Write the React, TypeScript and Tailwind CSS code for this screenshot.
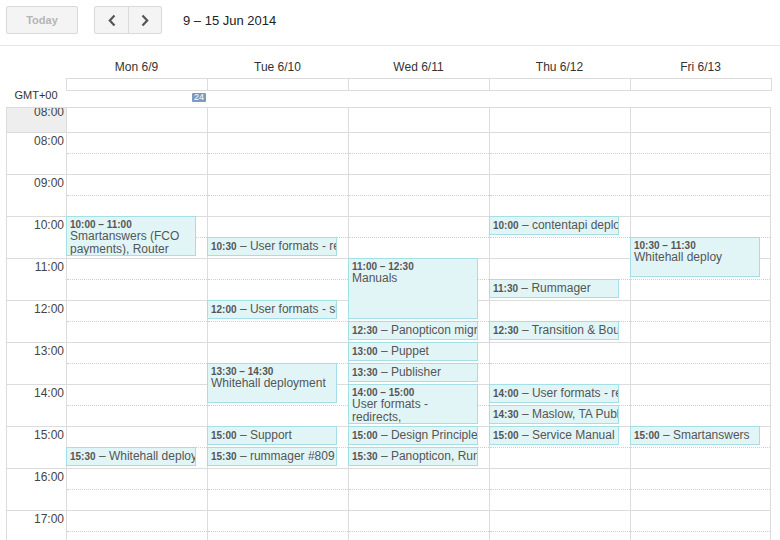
import React from "react";

type Ev = { h: number; m: number; d: number; t: string };

const DAYS = ["Mon 6/9", "Tue 6/10", "Wed 6/11", "Thu 6/12", "Fri 6/13"];
const HOURS = ["08:00", "09:00", "10:00", "11:00", "12:00", "13:00", "14:00", "15:00", "16:00", "17:00"];

const EVENTS: Ev[][] = [
  [
    { h: 10, m: 0, d: 60, t: "Smartanswers (FCO payments), Router" },
    { h: 15, m: 30, d: 30, t: "Whitehall deploy" },
  ],
  [
    { h: 10, m: 30, d: 30, t: "User formats - redirects" },
    { h: 12, m: 0, d: 30, t: "User formats - slugs" },
    { h: 13, m: 30, d: 60, t: "Whitehall deployment" },
    { h: 15, m: 0, d: 30, t: "Support" },
    { h: 15, m: 30, d: 30, t: "rummager #809 reindex" },
  ],
  [
    { h: 11, m: 0, d: 90, t: "Manuals" },
    { h: 12, m: 30, d: 30, t: "Panopticon migration" },
    { h: 13, m: 0, d: 30, t: "Puppet" },
    { h: 13, m: 30, d: 30, t: "Publisher" },
    { h: 14, m: 0, d: 60, t: "User formats - redirects," },
    { h: 15, m: 0, d: 30, t: "Design Principles" },
    { h: 15, m: 30, d: 30, t: "Panopticon, Rummager" },
  ],
  [
    { h: 10, m: 0, d: 30, t: "contentapi deploy" },
    { h: 11, m: 30, d: 30, t: "Rummager" },
    { h: 12, m: 30, d: 30, t: "Transition & Bouncer" },
    { h: 14, m: 0, d: 30, t: "User formats - redirects" },
    { h: 14, m: 30, d: 30, t: "Maslow, TA Publisher" },
    { h: 15, m: 0, d: 30, t: "Service Manual" },
  ],
  [
    { h: 10, m: 30, d: 60, t: "Whitehall deploy" },
    { h: 15, m: 0, d: 30, t: "Smartanswers" },
  ],
];

const pad = (n: number) => (n < 10 ? "0" + n : "" + n);
const fmt = (h: number, m: number) => `${pad(h)}:${pad(m)}`;

function Event({ e }: { e: Ev }) {
  const top = 25 + (e.h - 8) * 42 + e.m * 0.7;
  const height = e.d * 0.7 - 2;
  const endMin = e.h * 60 + e.m + e.d;
  const style = { top: `${top}px`, height: `${height}px` };
  if (e.d >= 60) {
    return (
      <div
        className="absolute -left-px w-[130px] border border-[#a3dfe4] bg-[#e1f5f7] text-[#555] overflow-hidden pl-[3px] pt-[2px]"
        style={style}
      >
        <div className="text-[10px] font-bold leading-[11px] whitespace-nowrap">
          {fmt(e.h, e.m)} – {fmt(Math.floor(endMin / 60), endMin % 60)}
        </div>
        <div className="text-[12px] leading-[13px]">{e.t}</div>
      </div>
    );
  }
  return (
    <div
      className="absolute -left-px w-[130px] border border-[#a3dfe4] bg-[#e1f5f7] text-[#555] overflow-hidden whitespace-nowrap pl-[3px] pt-px text-[12px] leading-[15px]"
      style={style}
    >
      <span className="text-[10px] font-bold">{fmt(e.h, e.m)}</span> – {e.t}
    </div>
  );
}

export default function App() {
  return (
    <div className="w-[780px] h-[540px] overflow-hidden bg-white font-['Liberation_Sans',Arial,sans-serif] text-[#333]">
      {/* toolbar */}
      <div className="h-[46px] flex items-start pt-[6px] pl-[6px] border-b border-[#e6e6e6]">
        <div className="w-[72px] h-[28px] flex items-center justify-center border border-[#dadada] rounded-[2px] bg-[#f4f4f4] text-[11px] font-bold text-[#b4b4b4]">
          Today
        </div>
        <div className="ml-[16px] w-[68px] h-[28px] flex border border-[#dadada] rounded-[2px] bg-[#f4f4f4]">
          <div className="w-[34px] h-full flex items-center justify-center border-r border-[#dadada]">
            <svg width="10" height="13" viewBox="0 0 10 13">
              <path d="M7.5 1.5 L2.8 6.5 L7.5 11.5" fill="none" stroke="#555" strokeWidth="2.2" />
            </svg>
          </div>
          <div className="flex-1 h-full flex items-center justify-center">
            <svg width="10" height="13" viewBox="0 0 10 13">
              <path d="M2.5 1.5 L7.2 6.5 L2.5 11.5" fill="none" stroke="#555" strokeWidth="2.2" />
            </svg>
          </div>
        </div>
        <div className="ml-[21px] h-[28px] flex items-center pt-[1px] text-[13px] text-[#222]">9 – 15 Jun 2014</div>
      </div>

      {/* day names */}
      <div className="flex pl-[66px] h-[32px]">
        {DAYS.map((d) => (
          <div key={d} className="w-[141px] flex items-end justify-center pb-[4px] text-[12px] leading-[14px] text-[#333]">
            {d}
          </div>
        ))}
      </div>

      {/* all-day + tz */}
      <div className="flex pl-[6px] h-[29px]">
        <div className="w-[60px] pt-[11px] text-center text-[11px] leading-[13px] text-[#333]">GMT+00</div>
        <div className="flex flex-col">
          <div className="flex h-[13px] border-y border-r border-[#dcdcdc]">
            {DAYS.map((d) => (
              <div key={d} className="w-[141px] border-l border-[#dcdcdc]" />
            ))}
          </div>
          <div className="relative w-[141px]">
            <div className="absolute right-[1px] top-[2px] w-[14px] h-[9px] rounded-[1px] bg-[#7b9bc1] text-white text-[9px] leading-[9px] text-center">
              24
            </div>
          </div>
        </div>
      </div>

      {/* body */}
      <div className="flex pl-[6px]">
        <div className="w-[60px] border-l border-[#dcdcdc] shrink-0">
          <div className="h-[25px] border-t border-[#dcdcdc] bg-[#eeeeee] overflow-hidden text-right pr-[2px]">
            <div className="-mt-[3px] text-[12px] leading-[14px] text-[#444]">08:00</div>
          </div>
          {HOURS.map((h) => (
            <div key={h} className="h-[42px] border-t border-[#dcdcdc] text-right pr-[2px]">
              <div className="pt-[1px] text-[12px] leading-[14px] text-[#444]">{h}</div>
            </div>
          ))}
        </div>
        {DAYS.map((d, i) => (
          <div
            key={d}
            className={`relative w-[141px] shrink-0 border-l border-[#dcdcdc] ${i === 4 ? "border-r" : ""}`}
          >
            <div className="h-[25px] border-t border-[#dcdcdc]" />
            {HOURS.map((h) => (
              <div key={h} className="h-[42px] border-t border-[#dcdcdc]">
                <div className="h-[21px] border-b border-dotted border-[#cfcfcf]" />
              </div>
            ))}
            {EVENTS[i].map((e, j) => (
              <Event key={j} e={e} />
            ))}
          </div>
        ))}
      </div>
    </div>
  );
}
